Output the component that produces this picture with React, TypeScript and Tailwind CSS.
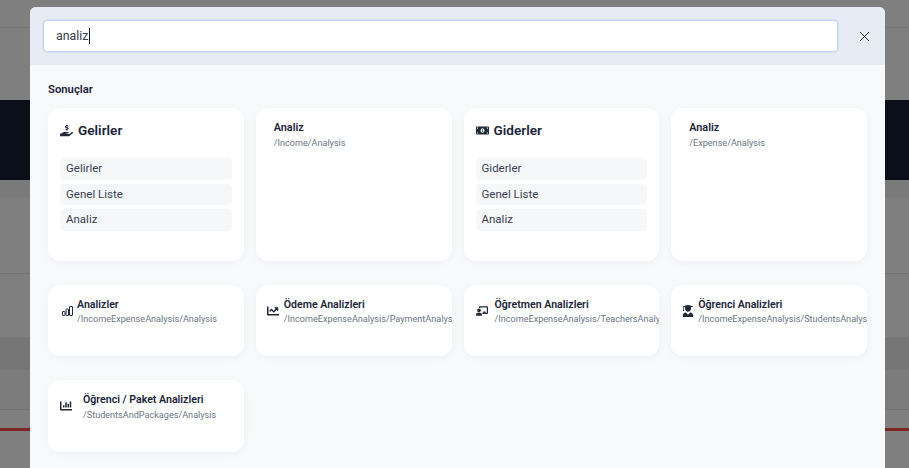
import type { ReactNode } from 'react';
import { FaChalkboardTeacher, FaChartBar, FaChartLine, FaHandHoldingUsd, FaMoneyBillAlt, FaUserGraduate } from 'react-icons/fa';
import { X } from 'lucide-react';

function BarsIcon() {
  return (
    <svg width="11" height="10" viewBox="0 0 11 10" fill="none" stroke="currentColor" strokeWidth="1">
      <rect x="0.5" y="5.5" width="2.5" height="4" rx="0.5" />
      <rect x="4" y="3" width="2.5" height="6.5" rx="0.5" />
      <rect x="7.5" y="0.5" width="3" height="9" rx="0.5" />
    </svg>
  );
}

function GroupCard({ icon, title, items, gap }: { icon: ReactNode; title: string; items: string[]; gap: string }) {
  return (
    <div className="h-[153px] rounded-xl bg-white px-3 pt-[13px] shadow-[0_2px_8px_rgba(15,23,42,0.04)]">
      <div className={`flex h-[19px] items-center ${gap} text-[13.6px] font-semibold text-[#1a2438]`}>
        {icon}
        <span>{title}</span>
      </div>
      <div className="mt-[18px] flex flex-col gap-1">
        {items.map((item) => (
          <div key={item} className="flex h-[21.5px] items-center rounded bg-[#f6f7f9] px-1.5 text-[11.5px] text-[#374151]">
            {item}
          </div>
        ))}
      </div>
    </div>
  );
}

function LinkCard({ title, path }: { title: string; path: string }) {
  return (
    <div className="h-[153px] overflow-hidden rounded-xl bg-white px-[18px] pt-[13px] shadow-[0_2px_8px_rgba(15,23,42,0.04)]">
      <div className="text-[10.8px] leading-[14px] font-semibold text-[#1a2438]">{title}</div>
      <div className="mt-[2px] text-[9.1px] leading-[13px] whitespace-nowrap text-[#6b7684]">{path}</div>
    </div>
  );
}

function IconCard({ icon, title, path, pad, h, subGap }: { icon: ReactNode; title: string; path: string; pad: string; h: string; subGap: string }) {
  return (
    <div className={`flex ${h} ${pad} overflow-hidden rounded-xl bg-white pt-[13px] shadow-[0_2px_8px_rgba(15,23,42,0.04)]`}>
      <div className="flex h-[26px] w-[12px] shrink-0 items-center justify-center text-[#1f2937]">{icon}</div>
      <div className="min-w-0">
        <div className="text-[10.6px] leading-[14px] font-semibold whitespace-nowrap text-[#1a2438]">{title}</div>
        <div className={`${subGap} text-[9.1px] leading-[13px] whitespace-nowrap text-[#6b7684]`}>{path}</div>
      </div>
    </div>
  );
}

export default function App() {
  return (
    <div className="relative h-[468px] w-[909px] overflow-hidden bg-[#7f7f7f] font-['Roboto',sans-serif]">
      {/* page behind the dim layer */}
      <div className="flex h-full flex-col">
        <div className="h-[28px] border-b border-[#757575]" />
        <div className="h-[72px]" />
        <div className="h-[80px] bg-[#0b0f19]" />
        <div className="h-[17px] bg-[#7a7a7a]" />
        <div className="h-[76px] border-t border-[#7c7c7c]" />
        <div className="h-[64px] border-t border-[#747474]" />
        <div className="h-[33px] border-t border-[#797979] bg-[#767676]" />
        <div className="h-[39px] border-t border-[#7b7b7b] bg-[#7c7c7c]" />
        <div className="h-[19px] border-t border-[#737373]" />
        <div className="h-[3px] bg-[#7f2525]" />
      </div>

      {/* search modal */}
      <div className="absolute top-[7px] left-[30px] h-[470px] w-[855px] overflow-hidden rounded-md bg-[#f8f9fb]">
        <div className="flex h-[58px] items-center bg-[#e7ecf4] pr-[9px] pl-[13px]">
          <div className="flex h-[32px] w-[795px] items-center rounded border border-[#c3d7f5] bg-white pl-[12px] text-[12.4px] text-[#374151] shadow-[0_0_0_1px_rgba(190,212,245,0.5)]">
            <span>analiz</span>
            <span className="h-[16px] w-[1.5px] bg-[#111827]" />
          </div>
          <button className="ml-auto flex h-6 w-6 items-center justify-center text-[#111827]">
            <X size={17} strokeWidth={1.3} />
          </button>
        </div>

        <div className="px-[18px] pt-[18px]">
          <h3 className="text-[11.3px] leading-[14px] font-semibold text-[#1a2438]">Sonuçlar</h3>

          <div className="mt-[11px] grid w-[819px] grid-cols-4 gap-x-3 gap-y-6">
            <GroupCard
              icon={<FaHandHoldingUsd size={13} className="text-[#1f2937]" />}
              title="Gelirler"
              items={['Gelirler', 'Genel Liste', 'Analiz']}
              gap="gap-[5px]"
            />
            <LinkCard title="Analiz" path="/Income/Analysis" />
            <GroupCard
              icon={<FaMoneyBillAlt size={13} className="text-[#1f2937]" />}
              title="Giderler"
              items={['Giderler', 'Genel Liste', 'Analiz']}
              gap="gap-[5px]"
            />
            <LinkCard title="Analiz" path="/Expense/Analysis" />

            <IconCard icon={<BarsIcon />} title="Analizler" path="/IncomeExpenseAnalysis/Analysis" pad="gap-[4px] pl-[13px]" h="h-[71px]" subGap="mt-[1px]" />
            <IconCard icon={<FaChartLine size={12} />} title="Ödeme Analizleri" path="/IncomeExpenseAnalysis/PaymentAnalysis" pad="gap-[5px] pl-[11px]" h="h-[71px]" subGap="mt-[1px]" />
            <IconCard icon={<FaChalkboardTeacher size={14} />} title="Öğretmen Analizleri" path="/IncomeExpenseAnalysis/TeachersAnalysis" pad="gap-[7px] pl-[12px]" h="h-[71px]" subGap="mt-[1px]" />
            <IconCard icon={<FaUserGraduate size={12} />} title="Öğrenci Analizleri" path="/IncomeExpenseAnalysis/StudentsAnalysis" pad="gap-[4px] pl-[11px]" h="h-[71px]" subGap="mt-[1px]" />
            <IconCard icon={<FaChartBar size={12} />} title="Öğrenci / Paket Analizleri" path="/StudentsAndPackages/Analysis" pad="gap-[11px] pl-[12px]" h="h-[72px]" subGap="mt-[2px]" />
          </div>
        </div>
      </div>
    </div>
  );
}
